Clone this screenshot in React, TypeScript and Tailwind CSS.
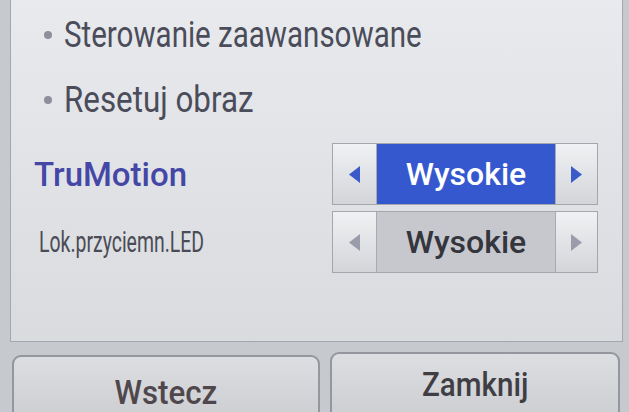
import React from "react";

const font = { fontFamily: "Roboto, 'Noto Sans', sans-serif" };

function Arrow({ dir, color }: { dir: "left" | "right"; color: string }) {
  return (
    <svg width="13" height="19" viewBox="0 0 13 19">
      {dir === "left" ? (
        <polygon points="12,1 12,18 1,9.5" fill={color} />
      ) : (
        <polygon points="1,1 1,18 12,9.5" fill={color} />
      )}
    </svg>
  );
}

function Spinner({ active }: { active: boolean }) {
  const arrow = active ? "#3a5bc9" : "#9a9cab";
  return (
    <div className="flex h-[62px] w-[266px] border border-[#a3a6ac] bg-[#d8dade]">
      <div className="flex w-[44px] items-center justify-center border-r border-[#a7aab0] bg-gradient-to-b from-[#f0f1f3] to-[#d3d5d9]">
        <Arrow dir="left" color={arrow} />
      </div>
      <div
        className={
          active
            ? "flex flex-1 items-center justify-center bg-[#3658cf]"
            : "flex flex-1 items-center justify-center bg-[#c6c8cd]"
        }
      >
        <span
          className={
            active
              ? "text-[32px] font-medium leading-none text-white"
              : "text-[32px] font-medium leading-none text-[#34353d]"
          }
          style={font}
        >
          Wysokie
        </span>
      </div>
      <div className="flex w-[42px] items-center justify-center border-l border-[#a7aab0] bg-gradient-to-b from-[#f0f1f3] to-[#d3d5d9]">
        <Arrow dir="right" color={arrow} />
      </div>
    </div>
  );
}

function Bullet({ text, scale, height }: { text: string; scale: string; height: string }) {
  return (
    <div className={`flex items-center pl-[33px] ${height}`}>
      <span className="mr-[12px] h-[8px] w-[8px] shrink-0 rounded-full bg-[#8d8f9c]" />
      <span
        className={`inline-block origin-left whitespace-nowrap text-[36px] leading-none text-[#4a4c59] ${scale}`}
        style={font}
      >
        {text}
      </span>
    </div>
  );
}

export default function App() {
  return (
    <div className="flex h-[412px] w-[629px] flex-col overflow-hidden bg-[#c6c9cd]">
      <div className="ml-[10px] mr-[6px] flex h-[342px] shrink-0 flex-col border-x border-b border-[#a4a7ad] bg-gradient-to-b from-[#e8eaee] to-[#d9dbdf]">
        <Bullet text="Sterowanie zaawansowane" scale="scale-x-[0.82]" height="h-[70px]" />
        <Bullet text="Resetuj obraz" scale="scale-x-[0.87]" height="h-[60px]" />

        <div className="mt-[13px] flex items-center justify-between pl-[23px] pr-[24px]">
          <span className="text-[33px] font-medium leading-none text-[#4547a6]" style={font}>
            TruMotion
          </span>
          <Spinner active />
        </div>

        <div className="mt-[6px] flex items-center justify-between pl-[28px] pr-[24px]">
          <span
            className="inline-block origin-left whitespace-nowrap text-[29px] leading-none text-[#4a4b55] scale-x-[0.67]"
            style={font}
          >
            Lok.przyciemn.LED
          </span>
          <Spinner active={false} />
        </div>
      </div>

      <div className="mt-[13px] flex gap-[10px] pl-[12px] pr-[9px]">
        <div className="flex h-[72px] w-[309px] items-start justify-center rounded-[9px] border-2 border-[#94979d] bg-gradient-to-b from-[#dcdee1] to-[#caccd0] pt-[18px]">
          <span
            className="inline-block scale-x-[0.92] text-[34px] font-medium leading-none text-[#4f474c]"
            style={font}
          >
            Wstecz
          </span>
        </div>
        <div className="-mt-[3px] flex h-[75px] w-[290px] items-start justify-center rounded-[9px] border-2 border-[#94979d] bg-gradient-to-b from-[#dcdee1] to-[#caccd0] pt-[13px]">
          <span
            className="inline-block scale-x-[0.87] text-[34px] font-medium leading-none text-[#403e45]"
            style={font}
          >
            Zamknij
          </span>
        </div>
      </div>
    </div>
  );
}
